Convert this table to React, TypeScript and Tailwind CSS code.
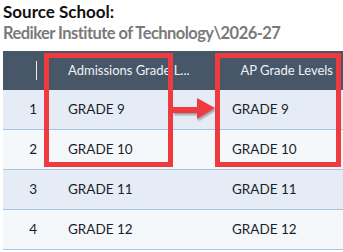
import React from "react";

const rows = [
  { n: 1, a: "GRADE 9", b: "GRADE 9" },
  { n: 2, a: "GRADE 10", b: "GRADE 10" },
  { n: 3, a: "GRADE 11", b: "GRADE 11" },
  { n: 4, a: "GRADE 12", b: "GRADE 12" },
];

export default function App() {
  return (
    <div className="relative w-[343px] h-[252px] bg-white overflow-hidden" style={{ fontFamily: "Lato, 'Noto Sans', sans-serif" }}>
      {/* Title */}
      <div className="pl-[3px] pt-[2px]">
        <div className="text-[17px] leading-[20px] font-bold text-[#111]">Source School:</div>
        <div className="text-[16.5px] leading-[22px] font-bold tracking-[-0.55px] text-[#7a7a7a]">Rediker Institute of Technology\2026-27</div>
      </div>

      {/* Table */}
      <div className="ml-[3px] mt-[7px]">
        <div className="flex h-[39px] bg-[#475768] text-[13px] text-[#eef2f7]">
          <div className="w-[34px] flex items-center justify-end">
            <div className="w-px h-[19px] bg-[#e6ecf2]" />
          </div>
          <div className="w-[15px]" />
          <div className="w-[164px] flex items-center pl-[16px] whitespace-nowrap overflow-hidden">Admissions Grade L...</div>
          <div className="flex-1 flex items-center justify-end pr-[10px]">AP Grade Levels</div>
        </div>
        {rows.map((r) => (
          <div
            key={r.n}
            className={`flex h-[40px] border-b border-[#a9c4e4] text-[13.5px] text-[#1b1e2a] ${r.n % 2 === 1 ? "bg-[#e6ecf5]" : "bg-[#f5f8fb]"}`}
          >
            <div className="w-[34px] flex items-center justify-end">{r.n}</div>
            <div className="w-[15px]" />
            <div className="w-[164px] flex items-center pl-[16px]">{r.a}</div>
            <div className="flex-1 flex items-center pl-[16px]">{r.b}</div>
          </div>
        ))}
      </div>

      {/* Highlight boxes */}
      <div className="absolute left-[44px] top-[53px] w-[129px] h-[114px] border-[5px] border-[#ef3b3f]" />
      <div className="absolute left-[215px] top-[53px] w-[126px] h-[114px] border-[5px] border-[#ef3b3f]" />

      {/* Arrow */}
      <svg className="absolute left-[171px] top-[96px]" width="48" height="26" viewBox="0 0 48 26">
        <defs>
          <filter id="sh" x="-20%" y="-30%" width="140%" height="160%">
            <feDropShadow dx="1" dy="2" stdDeviation="1.2" floodColor="#000" floodOpacity="0.35" />
          </filter>
        </defs>
        <path d="M2 11 L26 11 L26 2 L44 12 L26 23 L26 17 L2 17 Z" fill="#ef3b3f" filter="url(#sh)" />
      </svg>
    </div>
  );
}
